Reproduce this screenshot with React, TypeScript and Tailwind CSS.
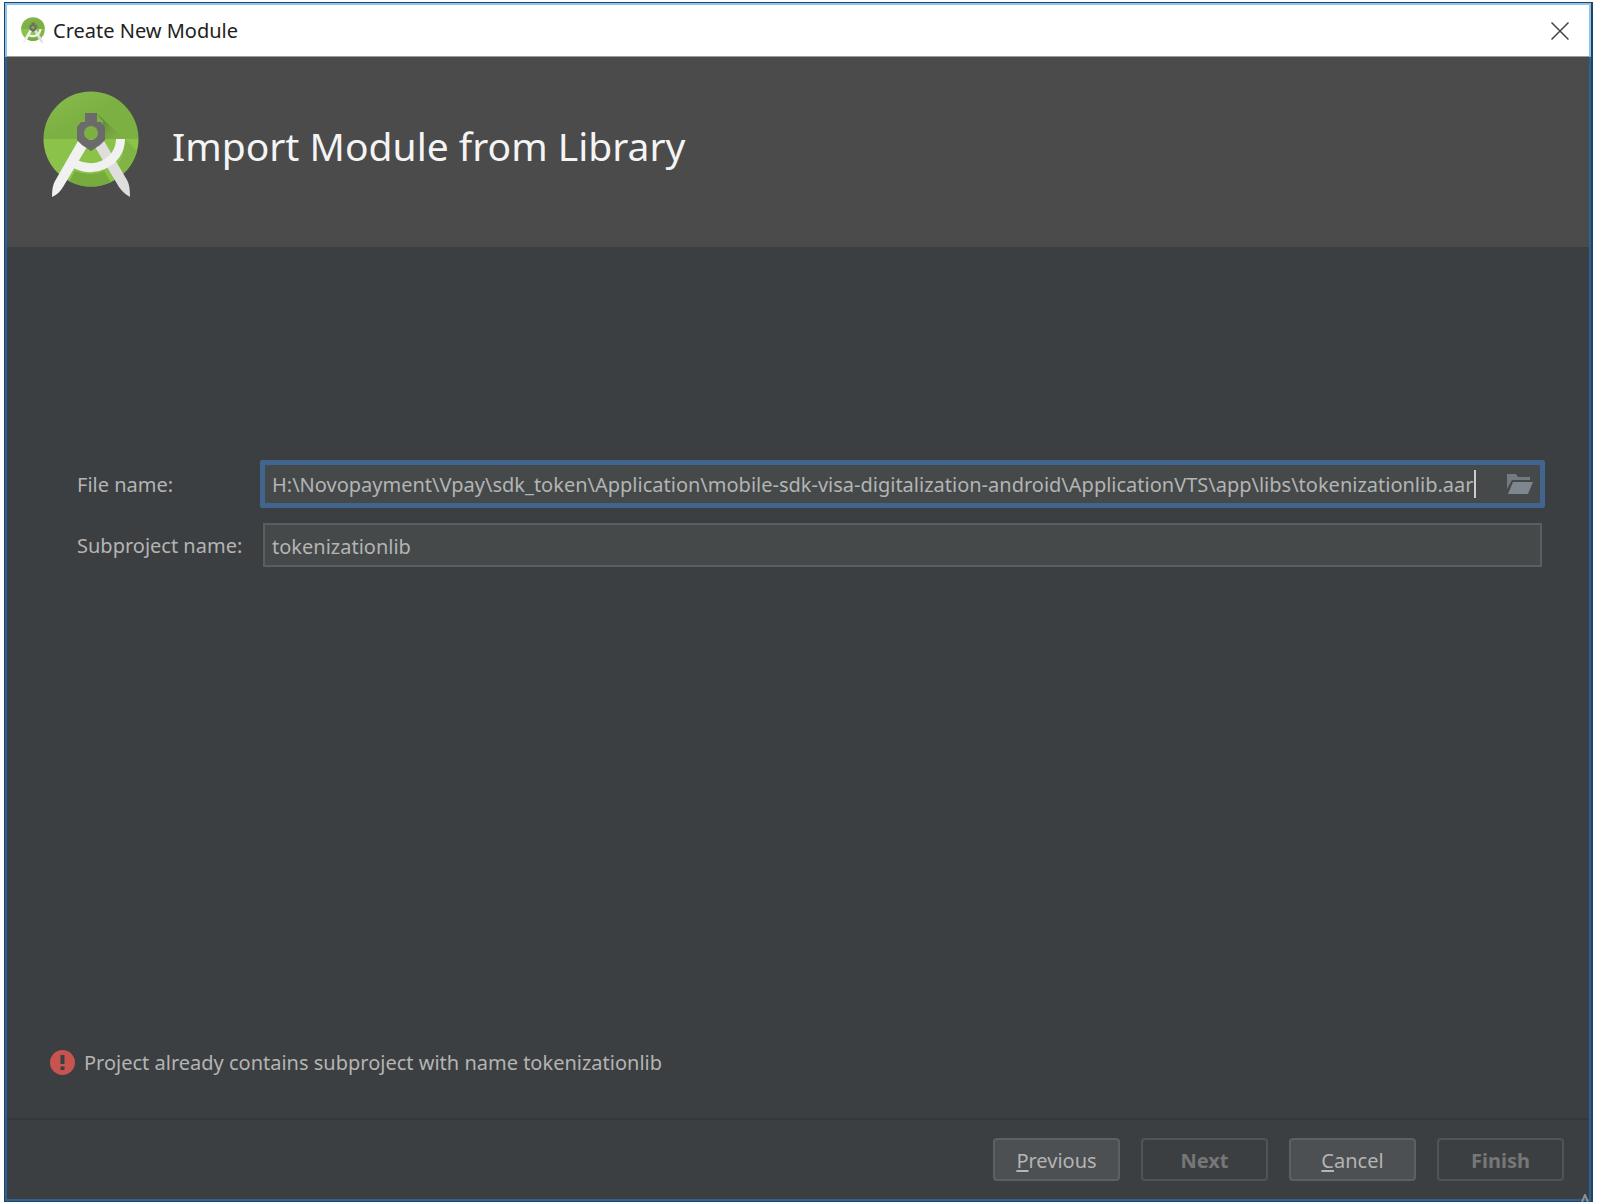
import React, { useId, useState } from "react";

function StudioLogo({ className }: { className: string }) {
  const id = useId();
  return (
    <svg viewBox="0 0 96 108" className={className} aria-hidden="true">
      <defs>
        <linearGradient id={id + "t"} x1="0" y1="0" x2="1" y2="1">
          <stop offset="0" stopColor="#8abd50" />
          <stop offset="0.5" stopColor="#7db043" />
          <stop offset="1" stopColor="#7db043" />
        </linearGradient>
        <linearGradient id={id + "s"} gradientUnits="userSpaceOnUse" x1="56" y1="28" x2="78" y2="52">
          <stop offset="0" stopColor="#55802f" />
          <stop offset="1" stopColor="#7db043" stopOpacity="0" />
        </linearGradient>
        <clipPath id={id + "c"}>
          <circle cx="48" cy="48" r="47.5" />
        </clipPath>
      </defs>
      <g clipPath={`url(#${id}c)`}>
        <rect width="96" height="48" fill={`url(#${id}t)`} />
        <rect y="48" width="96" height="48" fill="#8bc34a" />
        <path d="M53 22L82 48H60V30z" fill={`url(#${id}s)`} />
        <path d="M82 48Q82 70 68 80L78 96 96 80V62z" fill="#7db043" opacity="0.8" />
        <path d="M32 80Q47 86 61 80L72 98H22z" fill="#72a53a" opacity="0.8" />
      </g>
      <path d="M52 56L61 50 84 89Q87 94 87 106Q80 102 76 96z" fill="#dedede" />
      <path d="M32 73Q47 80 60 74Q77 66 77.500 48" fill="none" stroke="#f1f1f1" strokeWidth="9" />
      <path d="M35 50L44 56 20 96Q16 103 9 106Q9 95 12 90z" fill="#f1f1f1" />
      <path
        fillRule="evenodd"
        d="M42 22H54V31H58L62 36V49L57 54 48 60 39 54 34 49V36L38 31H42zM48 35a7 7 0 1 0 0 14a7 7 0 1 0 0-14z"
        fill="#6b6b6b"
      />
    </svg>
  );
}

function FolderIcon() {
  return (
    <svg viewBox="0 0 26 20" className="h-5 w-[26px]" aria-hidden="true">
      <path d="M0 0H9L11 3H23V6H5L0 15z" fill="#747a80" />
      <path d="M6 8H26L21 20H1z" fill="#7f868d" />
    </svg>
  );
}

function ErrorIcon() {
  return (
    <svg viewBox="0 0 25 25" className="size-[25px] shrink-0" aria-hidden="true">
      <circle cx="12.500" cy="12.500" r="12.500" fill="#c75450" />
      <path d="M10.500 5H14.500V14H10.500zM10.500 16.500H14.500V20H10.500z" fill="#3c3f41" />
    </svg>
  );
}

const enabledButton =
  "h-[43px] w-[127px] rounded-[4px] border-2 border-[#5c6062] bg-[#4c5052] pt-0.5 text-[#b4b4b4]";
const disabledButton =
  "h-[43px] w-[127px] rounded-[4px] border-2 border-[#515455] pt-0.5 font-bold text-[#777777]";
const mnemonic = "underline decoration-2 underline-offset-2";

export default function App() {
  const [file, setFile] = useState(
    "H:\\Novopayment\\Vpay\\sdk_token\\Application\\mobile-sdk-visa-digitalization-android\\ApplicationVTS\\app\\libs\\tokenizationlib.aar",
  );
  const [name, setName] = useState("tokenizationlib");

  return (
    <div className="flex h-screen bg-white pt-0.5 pr-[5px] pl-1 font-['Noto_Sans',sans-serif] text-[20px] leading-6">
      <main className="flex min-w-0 flex-1 flex-col border border-r-2 border-[#1f4464] bg-[#2f6190] text-[#b4b4b4]">
        <div className="flex h-[54px] shrink-0 items-center border-x-2 border-t-2 border-b border-x-[#8fc4ee] border-t-[#8fc4ee] border-b-[#9a9f98] bg-white pr-5 pl-3.5 text-black">
          <StudioLogo className="h-[27px] w-6" />
          <h1 className="ml-2 flex-1 text-[#222222]">Create New Module</h1>
          <button type="button" aria-label="Close" className="p-0">
            <svg viewBox="0 0 18 18" className="size-[18px]" aria-hidden="true">
              <path d="M0.500 0.500L17.500 17.500M17.500 0.500L0.500 17.500" stroke="#444444" strokeWidth="1.500" />
            </svg>
          </button>
        </div>

        <header className="mx-0.5 flex h-[190px] shrink-0 items-start bg-[#4b4b4b] pt-[34px] pl-9">
          <StudioLogo className="h-[108px] w-24" />
          <h2 className="mt-[29px] ml-[33px] text-[39px] leading-[52px] text-[#f4f4f4]">
            Import Module from Library
          </h2>
        </header>

        <form
          className="mx-0.5 mb-0.5 flex flex-1 flex-col bg-[#3c3f41]"
          onSubmit={(e) => e.preventDefault()}
        >
          <div className="grid grid-cols-[183px_minmax(0,1fr)] items-center gap-y-[15px] pt-[213px] pr-11 pl-[70px]">
            <label htmlFor="file" className="pt-0.5">
              File name:
            </label>
            <div className="flex h-12 items-center rounded-[2px] border-[5px] border-[#40668f] bg-[#45494a] pr-[7px] pl-[7px]">
              <input
                id="file"
                value={file}
                onChange={(e) => setFile(e.target.value)}
                className="field-sizing-content min-w-0 bg-transparent pt-0.5 outline-none"
              />
              <span className="h-7 w-0.5 bg-[#cccccc]" />
              <button type="button" aria-label="Browse" className="ml-auto">
                <FolderIcon />
              </button>
            </div>
            <label htmlFor="subproject" className="pt-0.5">
              Subproject name:
            </label>
            <input
              id="subproject"
              value={name}
              onChange={(e) => setName(e.target.value)}
              className="mx-[3px] h-11 border-2 border-[#5b5e60] bg-[#45494a] px-[7px] pt-0.5 outline-none"
            />
          </div>

          <p role="alert" className="mt-auto mb-[43px] flex items-center gap-[9px] pl-[43px]">
            <ErrorIcon />
            Project already contains subproject with name tokenizationlib
          </p>

          <footer className="relative flex h-[81px] shrink-0 items-center justify-end gap-[21px] border-t-2 border-[#353739] pr-[25px]">
            <button type="button" className={enabledButton}>
              <span className={mnemonic}>P</span>revious
            </button>
            <button type="button" disabled className={disabledButton}>
              Next
            </button>
            <button type="button" className={enabledButton}>
              <span className={mnemonic}>C</span>ancel
            </button>
            <button type="submit" disabled className={disabledButton}>
              Finish
            </button>
            <svg viewBox="0 0 8 8" className="absolute right-0 bottom-[-3px] size-2" aria-hidden="true">
              <path d="M1 8L4 1 7 8" fill="none" stroke="#8c8f91" strokeWidth="2" />
            </svg>
          </footer>
        </form>
      </main>
    </div>
  );
}
